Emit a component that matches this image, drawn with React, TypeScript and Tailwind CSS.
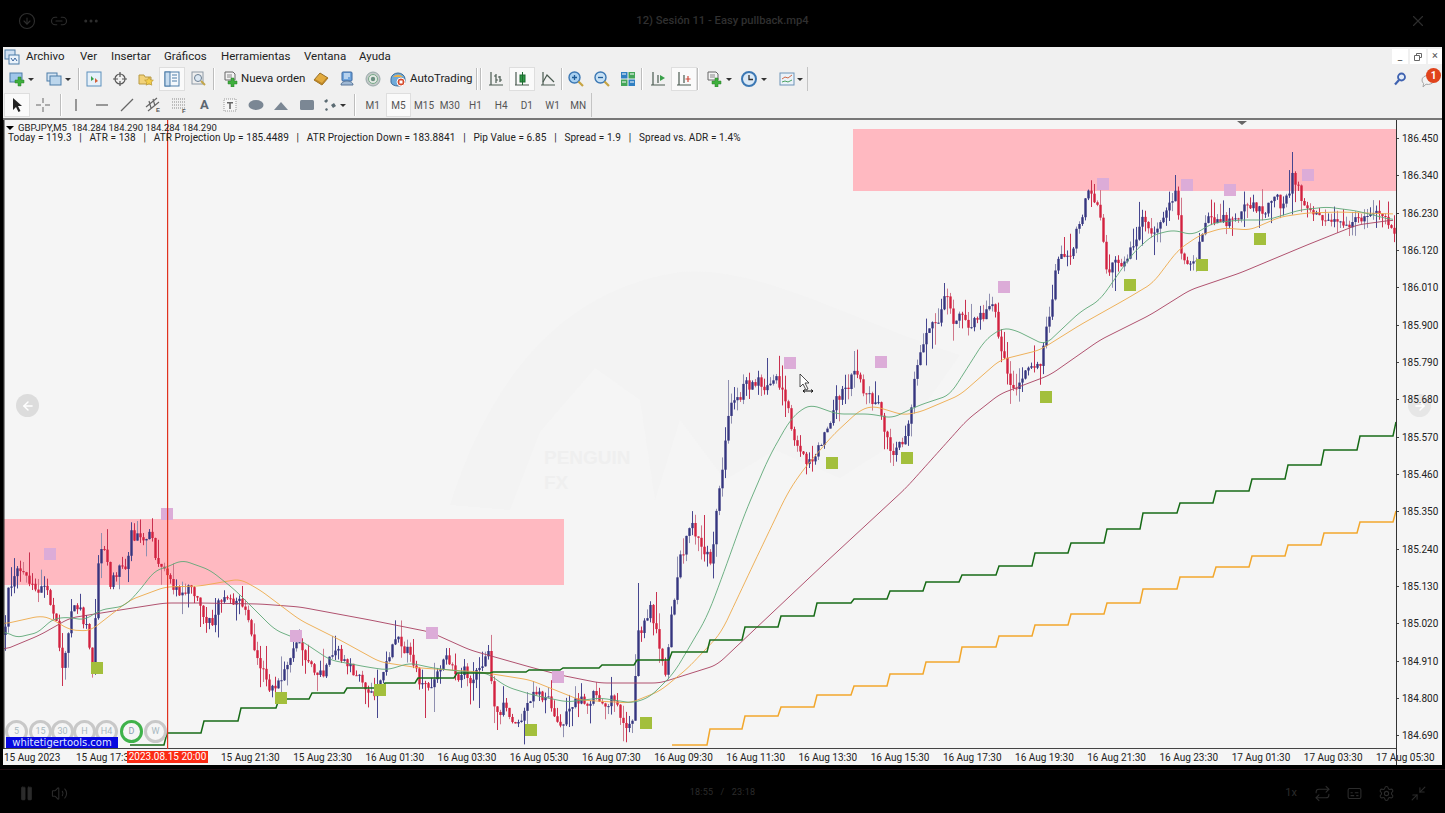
import { Pause, Volume2, Settings, Captions, Repeat, Minimize2, CircleArrowDown, Link2, Ellipsis, X, ArrowLeft, ArrowRight } from 'lucide-react';

type Pt = [number, number];

const closes: Pt[] = [
  [4, 650], [8, 590], [18, 572], [30, 582], [45, 585], [55, 625], [62, 665], [72, 610], [85, 625], [92, 668], [98, 560], [103, 540], [110, 580], [125, 565], [131, 530], [140, 535], [150, 530], [158, 560], [167, 575], [175, 590], [195, 595], [212, 622], [225, 592], [245, 612], [255, 660], [270, 688], [285, 665], [300, 652], [315, 680], [335, 662], [375, 682], [392, 645], [412, 652], [420, 692], [450, 660], [470, 678], [488, 655], [494, 715], [505, 705], [522, 718], [535, 688], [560, 715], [590, 692], [610, 698], [632, 728], [638, 640], [650, 600], [665, 665], [678, 560], [690, 530], [700, 538], [711, 560], [722, 470], [728, 420], [745, 385], [758, 380], [780, 385], [788, 420], [808, 465], [825, 440], [843, 385], [855, 375], [868, 400], [880, 410], [893, 460], [905, 430], [915, 370], [932, 320], [945, 297], [955, 325], [975, 318], [992, 315], [1010, 375], [1040, 378], [1055, 275], [1070, 250], [1085, 200], [1097, 200], [1106, 268], [1118, 270], [1130, 240], [1145, 225], [1165, 215], [1176, 180], [1180, 250], [1195, 262], [1205, 210], [1230, 222], [1262, 205], [1280, 205], [1292, 175], [1302, 205], [1330, 225], [1350, 222], [1375, 215], [1395, 232],
];

const spikes: Pt[] = [[1293, 152], [1176, 175], [853, 351], [766, 358], [945, 283], [1093, 184], [101, 533], [137, 521], [489, 645], [450, 648], [639, 583], [704, 515], [655, 592], [729, 380], [919, 345]];
const drops: Pt[] = [[62, 686], [425, 718], [435, 712], [496, 730], [632, 733], [808, 468], [893, 466], [1022, 392], [1114, 291], [378, 718], [480, 708], [268, 692]];

const greenMa: Pt[] = [[4, 630], [15, 638], [40, 632], [50, 620], [65, 617], [85, 620], [100, 610], [125, 606], [140, 590], [155, 570], [165, 568], [182, 560], [210, 570], [235, 590], [250, 605], [275, 630], [300, 640], [330, 660], [367, 667], [387, 670], [410, 663], [433, 668], [467, 672], [487, 673], [507, 687], [533, 695], [567, 702], [600, 698], [633, 703], [650, 697], [674, 673], [707, 617], [721, 580], [745, 513], [769, 457], [790, 420], [803, 408], [812, 405], [837, 414], [870, 414], [892, 418], [920, 405], [950, 395], [985, 340], [1002, 328], [1015, 330], [1045, 345], [1080, 312], [1100, 300], [1133, 253], [1153, 235], [1173, 230], [1193, 235], [1213, 223], [1240, 220], [1267, 220], [1300, 210], [1327, 207], [1357, 211], [1393, 220]];
const orangeMa: Pt[] = [[4, 624], [40, 616], [50, 618], [70, 630], [90, 631], [130, 600], [165, 587], [200, 586], [240, 579], [260, 590], [300, 620], [340, 640], [380, 662], [420, 668], [480, 672], [530, 680], [580, 700], [630, 703], [660, 691], [688, 668], [721, 633], [754, 563], [788, 492], [803, 470], [833, 435], [860, 410], [873, 406], [887, 410], [903, 415], [920, 412], [960, 395], [1000, 360], [1040, 350], [1080, 325], [1128, 298], [1153, 283], [1178, 250], [1200, 235], [1223, 228], [1250, 230], [1280, 217], [1307, 213], [1340, 212], [1393, 214]];
const maroonMa: Pt[] = [[4, 650], [40, 635], [70, 618], [120, 610], [165, 603], [200, 603], [260, 604], [300, 607], [370, 620], [430, 632], [470, 650], [530, 667], [560, 675], [600, 683], [660, 683], [717, 665], [754, 630], [825, 563], [906, 488], [967, 420], [1000, 394], [1050, 375], [1100, 340], [1150, 315], [1190, 290], [1240, 273], [1307, 245], [1357, 225], [1393, 220]];

const greenStep: Pt[] = [[130, 745], [167, 733], [204, 721], [241, 708], [279, 699], [312, 693], [347, 688], [385, 683], [418, 678], [457, 673], [493, 672], [529, 670], [563, 668], [602, 665], [637, 660], [672, 652], [710, 640], [745, 627], [781, 616], [817, 603], [854, 599], [890, 591], [926, 582], [962, 575], [999, 566], [1035, 553], [1071, 543], [1107, 529], [1143, 513], [1180, 503], [1216, 491], [1252, 479], [1288, 465], [1324, 450], [1360, 436], [1396, 422]];
const orangeStep: Pt[] = [[672, 745], [710, 729], [745, 716], [781, 707], [817, 695], [854, 686], [890, 674], [926, 662], [962, 647], [999, 636], [1035, 625], [1071, 614], [1107, 603], [1143, 589], [1180, 577], [1216, 567], [1252, 556], [1288, 545], [1324, 533], [1360, 522], [1396, 511]];

const pinkMarks: Pt[] = [[50, 554], [167, 514], [296, 636], [432, 633], [558, 677], [790, 363], [881, 362], [1004, 287], [1103, 184], [1187, 185], [1230, 190], [1308, 175]];
const greenMarks: Pt[] = [[97, 668], [281, 698], [380, 690], [531, 730], [646, 723], [832, 463], [907, 458], [1046, 397], [1130, 285], [1202, 265], [1260, 239]];

const prices = ['186.450', '186.340', '186.230', '186.120', '186.010', '185.900', '185.790', '185.680', '185.570', '185.460', '185.350', '185.240', '185.130', '185.020', '184.910', '184.800', '184.690'];
const times = ['15 Aug 21:30', '15 Aug 23:30', '16 Aug 01:30', '16 Aug 03:30', '16 Aug 05:30', '16 Aug 07:30', '16 Aug 09:30', '16 Aug 11:30', '16 Aug 13:30', '16 Aug 15:30', '16 Aug 17:30', '16 Aug 19:30', '16 Aug 21:30', '16 Aug 23:30', '17 Aug 01:30', '17 Aug 03:30', '17 Aug 05:30'];
const menus = [
  { label: 'Archivo', w: 'w-[54px]' }, { label: 'Ver', w: 'w-[31px]' }, { label: 'Insertar', w: 'w-[53px]' }, { label: 'Gráficos', w: 'w-[57px]' },
  { label: 'Herramientas', w: 'w-[83px]' }, { label: 'Ventana', w: 'w-[55px]' }, { label: 'Ayuda', w: 'w-[50px]' },
];
const periods = [
  { label: '5', on: false, m: 'ml-0' }, { label: '15', on: false, m: 'ml-[1px]' }, { label: '30', on: false, m: '-ml-[1px]' }, { label: 'H', on: false, m: '-ml-[1px]' },
  { label: 'H4', on: false, m: '-ml-[1px]' }, { label: 'D', on: true, m: 'ml-[2px]' }, { label: 'W', on: false, m: 'ml-[1px]' },
];

function lerp(pts: Pt[], x: number) {
  for (let i = 1; i < pts.length; i++) {
    if (x <= pts[i][0]) {
      const [x0, y0] = pts[i - 1];
      const [x1, y1] = pts[i];
      return y0 + ((y1 - y0) * (x - x0)) / (x1 - x0);
    }
  }
  return pts[pts.length - 1][1];
}

// resample and box-filter so the averages don't look like straight segments
function smooth(pts: Pt[], span = 2) {
  const xs: number[] = [];
  for (let x = pts[0][0]; x <= pts[pts.length - 1][0]; x += 3) xs.push(x);
  const ys = xs.map(x => lerp(pts, x));
  return xs.map((x, i) => {
    const a = Math.max(0, i - span);
    const b = Math.min(ys.length - 1, i + span);
    let sum = 0;
    for (let j = a; j <= b; j++) sum += ys[j];
    return [x, sum / (b - a + 1)] as Pt;
  });
}

function buildCandles() {
  let seed = 4711;
  const rnd = () => {
    seed = (seed * 16807) % 2147483647;
    return seed / 2147483647;
  };
  const out: { x: number; top: number; bottom: number; hi: number; lo: number; up: boolean; faded: boolean }[] = [];
  let prev = lerp(closes, 5);
  let drift = 0;
  for (let x = 5; x < 1395; x += 3) {
    const amp = x > 1300 ? 9 : 18;
    drift = drift * 0.55 + (rnd() - 0.5) * amp;
    const close = lerp(closes, x) + drift;
    const top = Math.min(prev, close);
    const bottom = Math.max(prev, close);
    let hi = top - rnd() * rnd() * 26;
    let lo = bottom + rnd() * rnd() * 26;
    for (const [sx, sy] of spikes) if (Math.abs(sx - x) < 2) hi = sy;
    for (const [sx, sy] of drops) if (Math.abs(sx - x) < 2) lo = sy;
    out.push({ x, top, bottom: Math.max(bottom, top + 1), hi, lo, up: close < prev, faded: rnd() > 0.6 });
    prev = close;
  }
  return out;
}

const candles = buildCandles();
const line = (pts: Pt[]) => pts.map(p => p.join(',')).join(' ');
const stepLine = (pts: Pt[]) => pts.flatMap((p, i) => (i === 0 ? [p] : [[p[0] - 3, pts[i - 1][1]] as Pt, p])).concat([[1396, pts[pts.length - 1][1]]]);

function Chart() {
  return (
    <svg width="1393" height="629" viewBox="3 120 1393 629" className="block">
      <path d="M450 505C490 380 560 290 680 272C760 265 850 320 960 355L900 440L840 478L775 450L725 480L680 420L655 500L640 400L595 368L540 432L510 510Z" fill="#f3f3f3" />
      <rect x="4" y="519" width="560" height="66" fill="#ffb9c1" />
      <rect x="853" y="129" width="543" height="62" fill="#ffb9c1" />
      {candles.map(c => (
        <g key={c.x}>
          <rect x={c.x} y={c.hi} width="1" height={c.lo - c.hi} fill={c.up ? (c.faded ? '#8f8fb0' : '#46468f') : c.faded ? '#d0768a' : '#c9304f'} />
          <rect x={c.x - 0.7} y={c.top} width="2.4" height={c.bottom - c.top} fill={c.up ? '#35357f' : '#d3213f'} />
        </g>
      ))}
      <polyline points={line(smooth(maroonMa))} fill="none" stroke="#a83f60" strokeWidth="0.9" />
      <polyline points={line(smooth(orangeMa))} fill="none" stroke="#eda94a" strokeWidth="0.9" />
      <polyline points={line(smooth(greenMa))} fill="none" stroke="#5fa877" strokeWidth="0.9" />
      <polyline points={line(stepLine(greenStep))} fill="none" stroke="#176b17" strokeWidth="1.5" />
      <polyline points={line(stepLine(orangeStep))} fill="none" stroke="#f2a72c" strokeWidth="1.5" />
      {pinkMarks.map(([x, y]) => (
        <rect key={x} x={x - 6} y={y - 6} width="12" height="12" fill="#dcacd8" />
      ))}
      {greenMarks.map(([x, y]) => (
        <rect key={x} x={x - 6} y={y - 6} width="12" height="12" fill="#a3bf3c" />
      ))}
      <rect x="167" y="120" width="1.2" height="629" fill="#e0321e" />
      <rect x="3" y="120" width="1.5" height="629" fill="#2a2a2a" />
      <path d="M1237 121h10l-5 4z" fill="#666" />
    </svg>
  );
}

function Drop() {
  return <span className="block h-0 w-0 border-x-[3px] border-t-[3px] border-x-transparent border-t-[#333]" />;
}

function Sep({ tight }: { tight?: boolean }) {
  return <span className={`h-[22px] w-[2px] shrink-0 border-l border-r border-l-[#bdbdbd] border-r-white ${tight ? '' : 'mx-[1px]'}`} />;
}

function Btn({ children, active, w = 'w-[26px]' }: { children: React.ReactNode; active?: boolean; w?: string }) {
  return (
    <div className={`flex h-[24px] shrink-0 items-center justify-center ${w} ${active ? 'border border-[#dedede] bg-[#fafafa]' : ''}`}>{children}</div>
  );
}

const Ic = ({ children, w = 16 }: { children: React.ReactNode; w?: number }) => (
  <svg width={w} height={16} viewBox={`0 0 ${w} 16`} className="shrink-0">{children}</svg>
);

const PlusMark = ({ x, y }: { x: number; y: number }) => <path transform={`translate(${x} ${y})`} d="M3 0h3v3h3v3H6v3H3V6H0V3h3z" fill="#3eaf3c" stroke="#2a7d2a" strokeWidth=".5" />;
const Bars = () => <path d="M3 1v13M1 14h14M8 3v9M6 5h2M8 9h2M12 5v6M10 6h2M12 9h2" stroke="#4a5a50" strokeWidth="1.2" fill="none" />;

function Toolbar1() {
  return (
    <div className="flex h-[26px] items-center pl-[3px]">
      <Btn w="w-[31px]">
        <Ic><rect x="1" y="2" width="12" height="9" fill="#9fc6ea" stroke="#4d7da8" /><PlusMark x={6} y={6} /></Ic>
        <span className="ml-[3px]"><Drop /></span>
      </Btn>
      <span className="w-[6px]" />
      <Btn w="w-[30px]">
        <Ic><rect x="1" y="2" width="10" height="8" fill="#d5e5f3" stroke="#4d7da8" /><rect x="4" y="5" width="11" height="9" fill="#bcd6ec" stroke="#4d7da8" /></Ic>
        <span className="ml-[3px]"><Drop /></span>
      </Btn>
      <span className="w-[4px]" />
      <Sep />
      <Btn><Ic><rect x="1" y="1" width="14" height="14" fill="#e6f1fa" stroke="#5c90bc" /><path d="M5 5l3 3-3 2z" fill="#3aa04a" /><path d="M9 7l3 3-3 2z" fill="#d4603a" /></Ic></Btn>
      <Btn><Ic><circle cx="8" cy="8" r="5" fill="none" stroke="#555" strokeWidth="1.2" /><path d="M8 1v5M8 10v5M1 8h5M10 8h5" stroke="#555" strokeWidth="1.2" /></Ic></Btn>
      <Btn><Ic><path d="M1 4h5l1 2h6v7H1z" fill="#f2d27a" stroke="#b89a45" /><path d="M11 6l1.400 2.800 3 .4-2.200 2 .6 3-2.800-1.500L8.200 14.200l.6-3-2.200-2 3-.4z" fill="#f5cf4c" stroke="#b08f2e" strokeWidth=".6" /></Ic></Btn>
      <Btn active><Ic><rect x="1" y="1" width="14" height="14" fill="#f4f8fc" stroke="#4d7da8" /><rect x="1" y="1" width="5" height="14" fill="#c7dcef" stroke="#4d7da8" /><path d="M8 4h5M8 7h5M8 10h5" stroke="#4d7da8" /></Ic></Btn>
      <Btn><Ic><rect x="2" y="1" width="11" height="12" fill="#eee" stroke="#8e9aa6" /><circle cx="8" cy="7" r="3.500" fill="#dce8f3" stroke="#6b7f92" /><path d="M11 10l4 4" stroke="#c2a54a" strokeWidth="2" /></Ic></Btn>
      <span className="w-[1px]" />
      <Sep />
      <span className="w-[1px]" />
      <div className="flex h-[24px] w-[91px] shrink-0 items-center pl-[5px]">
        <Ic><path d="M3 1h8l2 2v6H3z" fill="#f3f3f3" stroke="#666" /><path d="M5 4h5M5 6h5" stroke="#888" /><PlusMark x={6} y={7} /></Ic>
        <span className="ml-[3px] whitespace-nowrap text-[11.500px] text-[#222]">Nueva orden</span>
      </div>
      <Btn><Ic><path d="M1 9l6-7 8 5-6 7z" fill="#e2ab3f" stroke="#97702a" /><path d="M1 9l8 5 6-7-1-1-5 6-7-4z" fill="#b98428" /></Ic></Btn>
      <Btn><Ic><rect x="3" y="1" width="10" height="9" rx="1" fill="#6fa4dc" stroke="#3c68a0" /><path d="M5 3h6M5 5h6M5 7h4" stroke="#fff" /><path d="M2 14c0-3 4-4 6-4s6 1 6 4z" fill="#9fb8d4" stroke="#59779a" /></Ic></Btn>
      <Btn><Ic><circle cx="8" cy="8" r="7" fill="#c3c8c8" stroke="#9aa" /><circle cx="8" cy="8" r="4.500" fill="#e5eae5" stroke="#7a8" /><circle cx="8" cy="8" r="2.200" fill="#6b8f80" /></Ic></Btn>
      <span className="w-[2px]" />
      <div className="flex h-[24px] w-[86px] shrink-0 items-center pl-[2px]">
        <Ic><path d="M1 8a7 6 0 0 1 14 0v3a7 4 0 0 1-14 0z" fill="#6fa9d8" stroke="#3b6d9a" /><path d="M3 6c3-3 7-3 10 0" fill="#e8b04c" /><circle cx="11" cy="11" r="4" fill="#d6492a" stroke="#fff" /><rect x="9.500" y="9.500" width="3" height="3" fill="#fff" /></Ic>
        <span className="ml-[4px] whitespace-nowrap text-[11.500px] text-[#222]">AutoTrading</span>
      </div>
      <span className="w-[1px]" />
      <Sep />
      <Sep />
      <Btn><Ic><Bars /></Ic></Btn>
      <Btn active><Ic><path d="M2 1v13M1 14h14" stroke="#4a5a50" strokeWidth="1.2" /><rect x="6" y="4" width="5" height="7" fill="#2f9a46" stroke="#1d6a30" /><path d="M8.500 1v13" stroke="#1d6a30" /></Ic></Btn>
      <Btn><Ic><path d="M3 1v13M1 14h14" stroke="#4a5a50" strokeWidth="1.2" /><path d="M3 11l4-7 4 4 3 3" stroke="#4a5a50" fill="none" strokeWidth="1.2" /></Ic></Btn>
      <Sep tight />
      <Btn><Ic><circle cx="6.500" cy="6.500" r="5.500" fill="#a9d0f0" stroke="#3c78b4" strokeWidth="1.400" /><path d="M4 6.500h5M6.500 4v5" stroke="#1f5c98" strokeWidth="1.300" /><path d="M10.500 10.500l4.500 4.500" stroke="#c7a443" strokeWidth="2.200" /></Ic></Btn>
      <Btn><Ic><circle cx="6.500" cy="6.500" r="5.500" fill="#c6e0f4" stroke="#3c78b4" strokeWidth="1.400" /><path d="M4 6.500h5" stroke="#1f5c98" strokeWidth="1.300" /><path d="M10.500 10.500l4.500 4.500" stroke="#c7a443" strokeWidth="2.200" /></Ic></Btn>
      <Btn><Ic><rect x="1" y="1" width="6.500" height="6.500" fill="#2f7fc2" /><rect x="8.500" y="1" width="6.500" height="6.500" fill="#44a558" /><rect x="1" y="8.500" width="6.500" height="6.500" fill="#44a558" /><rect x="8.500" y="8.500" width="6.500" height="6.500" fill="#2f7fc2" /><path d="M2 3h4M10 3h4M2 11h4M10 11h4" stroke="#fff" /></Ic></Btn>
      <Sep tight />
      <span className="w-[2px]" />
      <Btn><Ic><path d="M3 1v13M1 14h14M8 4v8" stroke="#4a5a50" strokeWidth="1.200" fill="none" /><path d="M10 4l5 3-5 3z" fill="#3aa04a" /></Ic></Btn>
      <Btn active><Ic><path d="M3 1v13M1 14h14M8 4v8" stroke="#4a5a50" strokeWidth="1.200" fill="none" /><path d="M12 5v6M9.500 8h5" stroke="#cf4a3a" strokeWidth="1.200" /></Ic></Btn>
      <Sep tight />
      <span className="w-[6px]" />
      <Btn w="w-[28px]">
        <Ic><path d="M2 1h8l2 2v6H2z" fill="#f3f3f3" stroke="#666" /><path d="M4 4h5M4 6h5" stroke="#888" /><PlusMark x={6} y={7} /></Ic>
        <span className="ml-[4px]"><Drop /></span>
      </Btn>
      <span className="w-[6px]" />
      <Btn w="w-[29px]">
        <Ic><circle cx="8" cy="8" r="7" fill="#dbe9f6" stroke="#3c78b4" strokeWidth="2" /><path d="M8 4v4.500h4" stroke="#333" strokeWidth="1.300" fill="none" /></Ic>
        <span className="ml-[4px]"><Drop /></span>
      </Btn>
      <span className="w-[10px]" />
      <Btn w="w-[26px]">
        <Ic><rect x="1" y="2" width="14" height="12" fill="#eaf2f9" stroke="#6d93b8" /><path d="M3 8l3-2 3 1 4-3" stroke="#cf6a4a" fill="none" /><path d="M3 11l3-1 3 1 4-2" stroke="#4aa060" fill="none" /></Ic>
        <span className="ml-[2px]"><Drop /></span>
      </Btn>
      <span className="ml-[3px] h-[24px] w-[1px] bg-[#c4c4c4]" />
      <div className="ml-auto flex items-center pr-[4px]">
        <svg width="14" height="14" viewBox="0 0 14 14"><circle cx="8.500" cy="5" r="3.500" fill="#e3ecf8" stroke="#3f62b0" strokeWidth="1.800" /><path d="M6 8l-4 4.500" stroke="#3f62b0" strokeWidth="2.200" /></svg>
        <div className="relative ml-[13px] h-[16px] w-[18px]">
          <svg width="16" height="16" viewBox="0 0 16 16" className="mt-[2px]"><path d="M2 7a6 4.500 0 1 1 4 4.200L3 14l.6-3.500A4.500 4.500 0 0 1 2 7z" fill="#f2f2f2" stroke="#a6a6a6" /></svg>
          <span className="absolute -right-[3px] -top-[3px] flex h-[15px] w-[15px] items-center justify-center rounded-full bg-[#e0431c] text-[10px] font-bold text-white">1</span>
        </div>
      </div>
    </div>
  );
}

function Tf({ label, active }: { label: string; active?: boolean }) {
  return (
    <div className={`flex h-[24px] w-[25.700px] shrink-0 items-center justify-center text-[10px] text-[#555] ${active ? 'border border-[#dedede] bg-[#fafafa]' : ''}`}>{label}</div>
  );
}

function Toolbar2() {
  const w = 'w-[25.700px]';
  return (
    <div className="flex h-[26px] items-center pl-[1px]">
      <Btn active><Ic><path d="M4 1l9 8H9l2.500 5-2 1L7 10l-3 3z" fill="#222" /></Ic></Btn>
      <Btn><Ic><path d="M8 1v5M8 10v5M1 8h5M10 8h5" stroke="#666" /></Ic></Btn>
      <span className="w-[3px]" />
      <Sep />
      <Btn w={w}><Ic><path d="M8 2v12" stroke="#666" strokeWidth="1.300" /></Ic></Btn>
      <Btn w={w}><Ic><path d="M2 8h12" stroke="#666" strokeWidth="1.300" /></Ic></Btn>
      <Btn w={w}><Ic><path d="M2 14L14 2" stroke="#666" strokeWidth="1.200" /></Ic></Btn>
      <Btn w={w}><Ic><path d="M1 10L12 1M3 14L14 5M4 4l2 7M8 2l2 7" stroke="#666" strokeWidth="1.200" /><text x="11" y="15" fontSize="6" fontWeight="700" fill="#555" fontFamily="Liberation Sans">E</text></Ic></Btn>
      <Btn w={w}><Ic><path d="M1 2h13M1 5h13M1 8h13M1 11h13" stroke="#888" strokeDasharray="1 1" /><text x="11" y="16" fontSize="6" fontWeight="700" fill="#555" fontFamily="Liberation Sans">F</text></Ic></Btn>
      <div className={`flex h-[24px] shrink-0 items-center justify-center text-[13px] font-bold text-[#5c6670] ${w}`}>A</div>
      <Btn w={w}><Ic><rect x="2" y="2" width="12" height="12" fill="#f6f6f6" stroke="#999" strokeDasharray="1 1" /><path d="M5 5h6v1.500H8.800V12H7.200V6.500H5z" fill="#666" /></Ic></Btn>
      <Btn w={w}><Ic><ellipse cx="8" cy="8" rx="7.500" ry="5" fill="#7b8794" /></Ic></Btn>
      <Btn w={w}><Ic><path d="M1 13L8 5l7 8z" fill="#7b8794" /></Ic></Btn>
      <Btn w={w}><Ic><rect x="1" y="3" width="14" height="10" rx="1.500" fill="#7b8794" /></Ic></Btn>
      <Btn w="w-[28px]">
        <Ic><path d="M2 4l3-2 1 2-2 2zM9 8l3-2 2 3-3 2zM3 12l2-1 1 2-2 1z" fill="#5a6a72" /></Ic>
        <span className="ml-[2px]"><Drop /></span>
      </Btn>
      <span className="w-[5px]" />
      <Sep />
      <span className="w-[3px]" />
      <Tf label="M1" />
      <Tf label="M5" active />
      <Tf label="M15" />
      <Tf label="M30" />
      <Tf label="H1" />
      <Tf label="H4" />
      <Tf label="D1" />
      <Tf label="W1" />
      <Tf label="MN" />
      <span className="h-[24px] w-[1px] bg-[#c4c4c4]" />
    </div>
  );
}

export default function App() {
  return (
    <div className="flex h-[813px] w-[1445px] flex-col overflow-hidden bg-black font-['Roboto',sans-serif]">
      {/* player header */}
      <div className="flex h-[47px] shrink-0 items-center pb-[5px] text-[#2e2e2e]">
        <div className="flex w-[200px] items-center gap-[14px] pl-[18px]">
          <CircleArrowDown size={18} strokeWidth={1.5} />
          <Link2 size={18} strokeWidth={1.5} />
          <Ellipsis size={18} strokeWidth={2} />
        </div>
        <div className="flex-1 text-center text-[11.200px] font-medium text-[#303030]">12) Sesión 11 - Easy pullback.mp4</div>
        <div className="flex w-[200px] justify-end pr-[18px]"><X size={18} strokeWidth={1.5} /></div>
      </div>

      {/* terminal window */}
      <div className="ml-[3px] flex h-[718px] w-[1439px] shrink-0 flex-col bg-[#f0f0f0]">
        <div className="flex h-[19px] items-center text-[11.500px] text-[#222]">
          <svg width="16" height="16" viewBox="0 0 16 16" className="ml-[1px] shrink-0"><rect x="1" y="1" width="10" height="9" fill="#cfe0f2" stroke="#4d7da8" /><rect x="5" y="6" width="10" height="9" fill="#eaf2fa" stroke="#4d7da8" /><path d="M7 9l2 3 2-3 2 3" stroke="#3c68a0" fill="none" /></svg>
          <span className="w-[6px]" />
          {menus.map(m => (
            <span key={m.label} className={m.w}>{m.label}</span>
          ))}
          <div className="ml-auto flex items-center gap-[2px] text-[#555]">
            <span className="flex h-[15px] w-[16px] items-center justify-center bg-white text-[10px]">_</span>
            <span className="flex h-[15px] w-[16px] items-center justify-center bg-white">
              <svg width="8" height="8" viewBox="0 0 8 8"><path d="M2.500 2V.5h5v4H6M.5 2.500h5v5h-5z" fill="none" stroke="#666" /></svg>
            </span>
            <span className="flex h-[15px] w-[14px] items-center justify-center bg-white text-[11px]">×</span>
          </div>
        </div>
        <Toolbar1 />
        <Toolbar2 />
        <div className="h-[2px] shrink-0 bg-[#777]" />

        <div className="flex h-[645px] shrink-0 bg-[#f5f5f5]">
          <div className="flex w-[1393px] shrink-0 flex-col">
            <div className="relative h-[629px] shrink-0 border-b border-[#444]">
              <Chart />
              <div className="absolute left-[3px] top-[3px] text-[#222]">
                <div className="flex h-[10px] items-center text-[9.500px] leading-[10px]">
                  <span className="mr-[4px] h-0 w-0 border-x-[4px] border-t-[4px] border-x-transparent border-t-black" />
                  <span>GBPJPY,M5&nbsp; 184.284 184.290 184.284 184.290</span>
                </div>
                <div className="whitespace-pre pl-[2px] text-[10px] leading-[10px] tracking-[0.090px]">Today = 119.3   |   ATR = 138   |   ATR Projection Up = 185.4489   |   ATR Projection Down = 183.8841   |   Pip Value = 6.85   |   Spread = 1.9   |   Spread vs. ADR = 1.4%</div>
              </div>
              <div className="absolute left-[541px] top-[325px] font-['Liberation_Sans',sans-serif] text-[19px] font-bold leading-[25px] text-[#efefef]">PENGUIN<br />FX</div>
              <div className="absolute left-[13px] top-[274px] flex h-[23px] w-[23px] items-center justify-center rounded-full bg-[#dcdcdc] text-white"><ArrowLeft size={14} strokeWidth={2.500} /></div>
              <div className="absolute bottom-[5px] left-[2px] flex">
                {periods.map(p => (
                  <div
                    key={p.label}
                    className={`flex h-[23px] w-[23px] items-center justify-center rounded-full border-[3px] text-[9px] leading-none ${p.m} ${p.on ? 'border-[#3fb24a] text-[#8aa0b0]' : 'border-[#c8c8c8] text-[#a8b8c0]'}`}
                  >
                    {p.label}
                  </div>
                ))}
              </div>
              <div className="absolute bottom-0 left-[3px] flex h-[11px] w-[112px] items-center justify-center bg-[#0808e0] font-['DejaVu_Sans',sans-serif] text-[10px] leading-none text-[#dfe6ff]">whitetigertools.com</div>
              <svg width="18" height="26" viewBox="0 0 18 26" className="absolute left-[796px] top-[253px]">
                <path d="M1 1v13l3-3 3 6 2-1-3-6h4z" fill="#fff" stroke="#222" strokeWidth=".8" />
                <path d="M4 18h10M4 18l2-1.500M4 18l2 1.500M14 18l-2-1.500M14 18l-2 1.500" stroke="#111" strokeWidth="1" />
              </svg>
            </div>
            <div className="relative flex h-[16px] items-center whitespace-nowrap text-[10px] text-[#222]">
              <span className="w-[73px] shrink-0 pl-[1px]">15 Aug 2023</span>
              <span className="w-[145px] shrink-0">15 Aug 17:3</span>
              {times.map(t => (
                <span key={t} className="w-[72.200px] shrink-0">{t}</span>
              ))}
              <span className="absolute left-[124px] top-[2px] w-[81px] bg-[#fb2a14] text-center text-[10px] leading-[12px] text-white">2023.08.15 20:00</span>
            </div>
          </div>
          <div className="relative flex-1 border-l border-[#333] text-[10px] text-[#222]">
            <div className="absolute left-[11px] top-[274px] flex h-[23px] w-[23px] items-center justify-center rounded-full bg-[#e6e6e6] text-white"><ArrowRight size={14} strokeWidth={2.500} /></div>
            <div className="relative">
              {prices.map(p => (
                <div key={p} className="flex h-[37.320px] items-center">
                  <span className="mr-[3px] h-px w-[2px] bg-[#444]" />
                  {p}
                </div>
              ))}
            </div>
          </div>
        </div>
      </div>

      {/* player controls */}
      <div className="flex flex-1 flex-col text-[#2c2c2c]">
        <div className="mt-[4px] h-px bg-[#1c0c10]" />
        <div className="flex flex-1 items-center pt-[3px]">
          <div className="flex w-[300px] items-center gap-[16px] pl-[18px]">
            <Pause size={17} fill="#2c2c2c" strokeWidth={1} />
            <Volume2 size={17} strokeWidth={1.500} />
          </div>
          <div className="flex-1 whitespace-pre text-center text-[9px] tracking-[0.200px]">18:55   /   23:18</div>
          <div className="flex w-[300px] items-center justify-end gap-[15px] pr-[18px]">
            <span className="mr-[2px] text-[11px]">1x</span>
            <Repeat size={17} strokeWidth={1.500} />
            <Captions size={17} strokeWidth={1.500} />
            <Settings size={17} strokeWidth={1.500} />
            <Minimize2 size={17} strokeWidth={1.500} />
          </div>
        </div>
      </div>
    </div>
  );
}
